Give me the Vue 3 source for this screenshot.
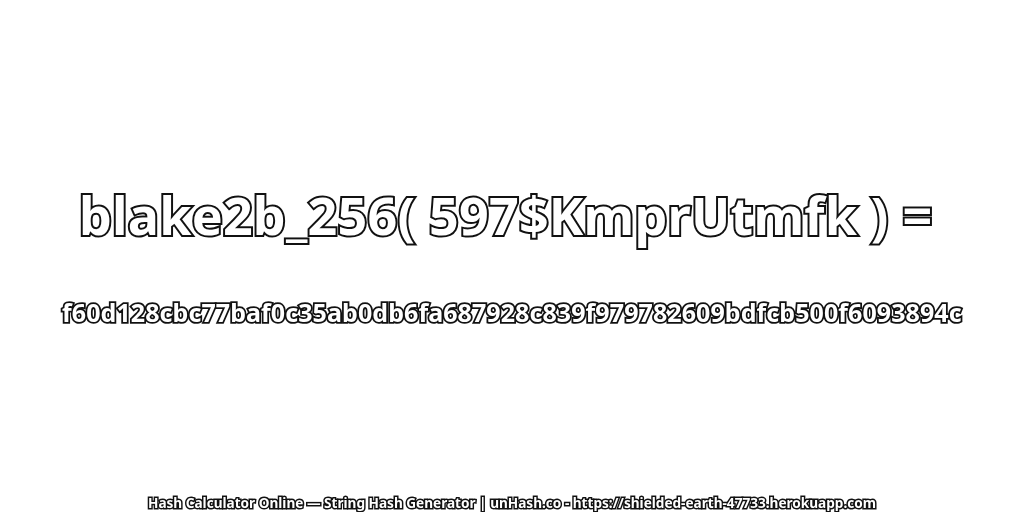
<script setup>
const title = 'blake2b_256( 597$KmprUtmfk ) ='
const hash = 'f60d128cbc77baf0c35ab0db6fa687928c839f979782609bdfcb500f6093894c'
const foot = 'Hash Calculator Online — String Hash Generator | unHash.co - https://shielded-earth-47733.herokuapp.com'
</script>

<template>
  <div class="page">
    <div class="main">
      <div class="title">{{ title }}</div>
      <div class="hash">{{ hash }}</div>
    </div>
    <div class="foot">{{ foot }}</div>
  </div>
</template>

<style scoped>
.page {
  width: 1024px;
  height: 512px;
  background: #fff;
  display: flex;
  flex-direction: column;
  align-items: center;
  font-family: "Noto Sans", "Open Sans", sans-serif;
  font-weight: 700;
  color: #fff;
  overflow: hidden;
}
.main {
  flex: 1;
  display: flex;
  flex-direction: column;
  align-items: center;
  padding-top: 180px;
  gap: 45px;
}
.title, .hash, .foot {
  white-space: pre;
  paint-order: stroke fill;
  will-change: transform;
}
.title {
  font-size: 52px;
  line-height: 70px;
  letter-spacing: 0.22px;
  padding-right: 12px;
  -webkit-text-stroke: 4px #111;
}
.hash {
  font-size: 25px;
  line-height: 34px;
  letter-spacing: 0.08px;
  -webkit-text-stroke: 3.6px #111;
}
.foot {
  font-size: 13.6px;
  line-height: 14px;
  margin-bottom: 2px;
  -webkit-text-stroke: 3px #111;
}
</style>
